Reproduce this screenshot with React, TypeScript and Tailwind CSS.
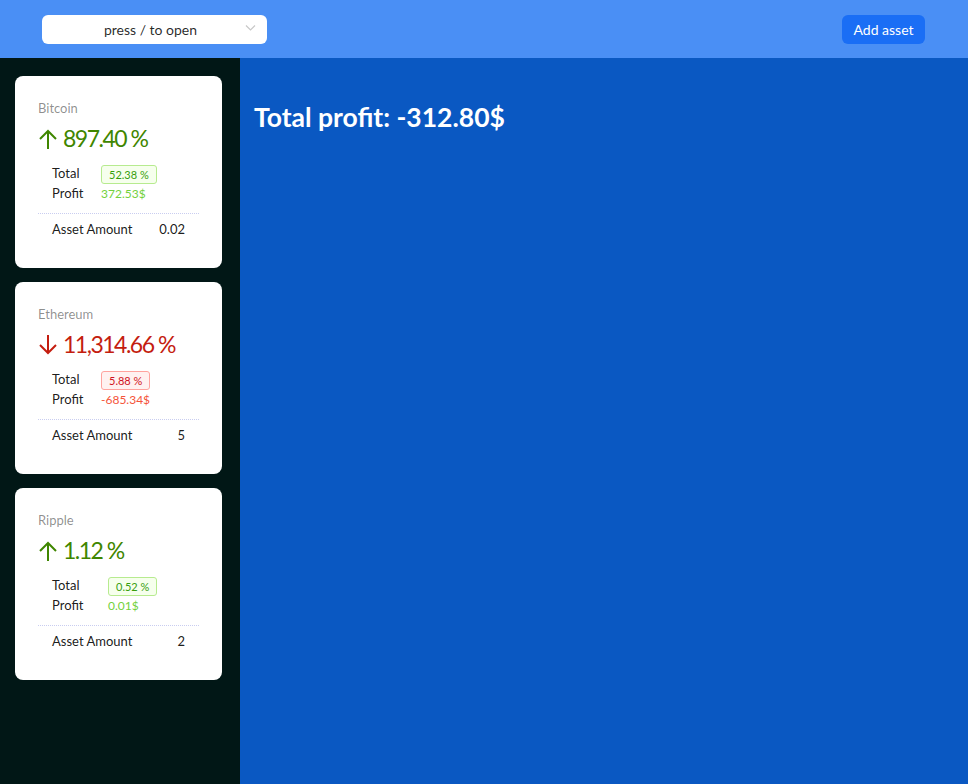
import React from "react";

type Asset = {
  name: string;
  change: string;
  up: boolean;
  total: string;
  profit: string;
  amount: string;
  colOffset: string;
};

const ASSETS: Asset[] = [
  { name: "Bitcoin", change: "897.40 %", up: true, total: "52.38 %", profit: "372.53$", amount: "0.02", colOffset: "w-[49px]" },
  { name: "Ethereum", change: "11,314.66 %", up: false, total: "5.88 %", profit: "-685.34$", amount: "5", colOffset: "w-[49px]" },
  { name: "Ripple", change: "1.12 %", up: true, total: "0.52 %", profit: "0.01$", amount: "2", colOffset: "w-[56px]" },
];

const FONT = "font-['Lato','Noto_Sans',sans-serif]";

function Arrow({ up, color }: { up: boolean; color: string }) {
  return (
    <svg
      width="20"
      height="22"
      viewBox="0 0 20 22"
      className={up ? "" : "rotate-180"}
      fill="none"
      stroke={color}
      strokeWidth="2"
    >
      <path d="M10 3 L10 21" />
      <path d="M2 11 L10 3 L18 11" />
    </svg>
  );
}

function AssetCard({ asset }: { asset: Asset }) {
  const main = asset.up ? "#3f8600" : "#c41d0f";
  const tag = asset.up
    ? "bg-[#f6ffed] border-[#b7eb8f] text-[#389e0d]"
    : "bg-[#fff1f0] border-[#ffa39e] text-[#cf1322]";
  const profit = asset.up ? "text-[#73d13d]" : "text-[#f5543a]";

  return (
    <div className="bg-white rounded-lg h-[192px] px-[23px] pt-[21px]">
      <div className="h-[22px] leading-[22px] text-[13px] text-black/45">{asset.name}</div>
      <div className="h-[39px] flex items-center gap-[5px]">
        <Arrow up={asset.up} color={main} />
        <span className="text-[23px] leading-none tracking-[-1.5px]" style={{ color: main }}>
          {asset.change}
        </span>
      </div>
      <div className="pl-[14px] pt-[6px] text-[13px] text-black/90">
        <div className="flex items-center h-[20px]">
          <span className={asset.colOffset}>Total</span>
          <span className={`border rounded-[3px] px-[7px] h-[19px] leading-[17px] text-[11px] ${tag}`}>
            {asset.total}
          </span>
        </div>
        <div className="flex items-center h-[20px]">
          <span className={asset.colOffset}>Profit</span>
          <span className={`text-[12px] ${profit}`}>{asset.profit}</span>
        </div>
      </div>
      <div className="mt-[9px] border-t border-dotted border-[#c9cdf0]" />
      <div className="flex items-center justify-between h-[32px] pl-[14px] pr-[14px] text-[13px] text-black/90">
        <span>Asset Amount</span>
        <span>{asset.amount}</span>
      </div>
    </div>
  );
}

export default function App() {
  return (
    <div className={`w-[968px] h-[784px] flex flex-col ${FONT}`}>
      <header className="h-[58px] bg-[#4a8ff5] flex items-center justify-between pl-[42px] pr-[43px]">
        <div className="w-[225px] h-[29px] bg-white rounded-md flex items-center relative">
          <span className="w-full text-center text-[14px] text-black/85 pr-[18px] pl-[10px]">press / to open</span>
          <svg className="absolute right-[11px] top-[9px]" width="11" height="8" viewBox="0 0 11 8" fill="none" stroke="#c8c8c8" strokeWidth="1.2">
            <path d="M1 1.5 L5.5 6 L10 1.5" />
          </svg>
        </div>
        <button className="h-[29px] w-[83px] bg-[#1a6ef5] rounded-md text-white text-[14px]">Add asset</button>
      </header>
      <div className="flex flex-1">
        <aside className="w-[240px] bg-[#011716] pt-[18px] pl-[15px] pr-[18px] flex flex-col gap-[14px]">
          {ASSETS.map((a) => (
            <AssetCard key={a.name} asset={a} />
          ))}
        </aside>
        <main className="flex-1 bg-[#0a58c2] pl-[14px] pt-[42px]">
          <h1 className="text-white text-[26.5px] font-bold leading-[34px]">Total profit: -312.80$</h1>
        </main>
      </div>
    </div>
  );
}
